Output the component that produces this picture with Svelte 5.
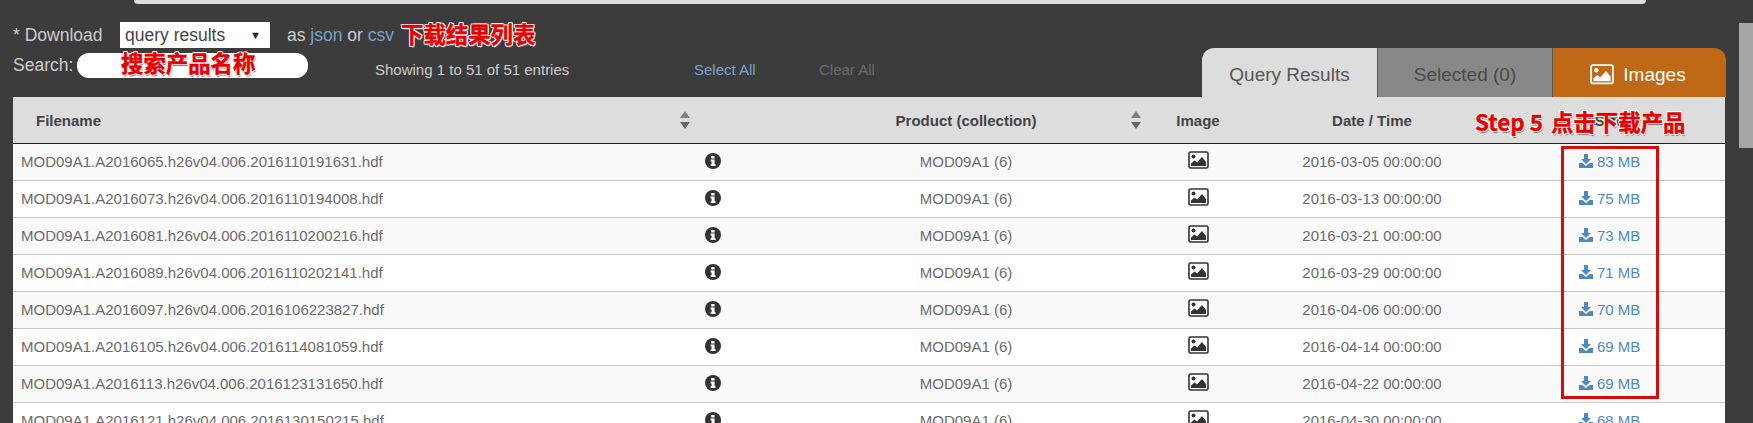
<script>
	const rows = [
		['MOD09A1.A2016065.h26v04.006.2016110191631.hdf', '2016-03-05 00:00:00', '83 MB'],
		['MOD09A1.A2016073.h26v04.006.2016110194008.hdf', '2016-03-13 00:00:00', '75 MB'],
		['MOD09A1.A2016081.h26v04.006.2016110200216.hdf', '2016-03-21 00:00:00', '73 MB'],
		['MOD09A1.A2016089.h26v04.006.2016110202141.hdf', '2016-03-29 00:00:00', '71 MB'],
		['MOD09A1.A2016097.h26v04.006.2016106223827.hdf', '2016-04-06 00:00:00', '70 MB'],
		['MOD09A1.A2016105.h26v04.006.2016114081059.hdf', '2016-04-14 00:00:00', '69 MB'],
		['MOD09A1.A2016113.h26v04.006.2016123131650.hdf', '2016-04-22 00:00:00', '69 MB'],
		['MOD09A1.A2016121.h26v04.006.2016130150215.hdf', '2016-04-30 00:00:00', '68 MB']
	];
</script>

{#snippet sortIcon()}
	<svg class="sort" width="10" height="18" viewBox="0 0 10 18">
		<path d="M5 0 10 7H0z" fill="#808080" />
		<path d="M5 18 0 11H10z" fill="#666" />
	</svg>
{/snippet}

{#snippet pictureIcon(size)}
	<svg width={size} height={size * 0.86} viewBox="0 0 21 18">
		<rect x="1" y="1" width="19" height="16" rx="1.5" fill="none" stroke="currentColor" stroke-width="1.6" />
		<circle cx="5.5" cy="5.5" r="2" fill="currentColor" />
		<path d="M3 15v-2.5l3.5-3 2.5 2 5-5.5 4 5v4z" fill="currentColor" />
	</svg>
{/snippet}

<div class="page">
	<div class="top-bar"></div>
	<div class="scrollbar"></div>

	<div class="download-line">
		<span class="download-label">* Download</span>
		<div class="select"><span>query results</span><span class="caret">▼</span></div>
		<span class="as">as <a href="#json">json</a> or <a href="#csv">csv</a></span>
		<span class="note">下载结果列表</span>
	</div>

	<div class="tool-line">
		<label class="search" for="search">Search:</label>
		<div class="search-box">
			<input id="search" type="text" />
			<span class="note over">搜索产品名称</span>
		</div>
		<span class="entries">Showing 1 to 51 of 51 entries</span>
		<a class="select-all" href="#all">Select All</a>
		<span class="clear-all">Clear All</span>
		<div class="tabs">
			<div class="tab query">Query Results</div>
			<div class="tab selected">Selected (0)</div>
			<div class="tab images">{@render pictureIcon(24)}<span>Images</span></div>
		</div>
	</div>

	<div class="table-wrap">
		<table>
			<colgroup>
				<col style="width: 675px" />
				<col style="width: 50px" />
				<col style="width: 48px" />
				<col style="width: 360px" />
				<col style="width: 104px" />
				<col style="width: 244px" />
				<col style="width: 231px" />
			</colgroup>
			<thead>
				<tr>
					<th class="th-file">
						<div class="th-flex"><span>Filename</span>{@render sortIcon()}</div>
					</th>
					<th></th>
					<th></th>
					<th class="th-product">
						<div class="th-grid"><span></span><span>Product (collection)</span>{@render sortIcon()}</div>
					</th>
					<th>Image</th>
					<th>Date / Time</th>
					<th>Size</th>
				</tr>
			</thead>
			<tbody>
				{#each rows as row}
					<tr>
						<td class="file">{row[0]}</td>
						<td class="center">
							<svg class="info" width="16" height="16" viewBox="0 0 16 16">
								<circle cx="8" cy="8" r="8" fill="#333" />
								<path d="M6.2 3h3.4v2.4H6.2zM5.6 6.6h4v4.6h1v1.9H5.6v-1.9h1V8.5h-1z" fill="#fff" />
							</svg>
						</td>
						<td></td>
						<td class="center">MOD09A1 (6)</td>
						<td class="center picture">{@render pictureIcon(21)}</td>
						<td class="center">{row[1]}</td>
						<td class="center">
							<a class="size" href="#get">
								<svg width="14" height="14" viewBox="0 0 14 14">
									<path d="M5 0h4v5h3L7 10 2 5h3z" fill="currentColor" />
									<path d="M0 9h3.4L7 12l3.6-3H14v5H0z" fill="currentColor" />
								</svg>
								{row[2]}
							</a>
						</td>
					</tr>
				{/each}
			</tbody>
		</table>
		<div class="red-box"></div>
		<div class="step-note"><span class="step">Step 5</span> 点击下载产品</div>
	</div>
</div>

<style>
	:global(body) {
		margin: 0;
		background: #3c3c3c;
	}

	.page {
		position: relative;
		height: 423px;
		overflow: hidden;
		background: #3c3c3c;
		font-family: "Liberation Sans", Arial, sans-serif;
		color: #ccc;
	}

	a {
		text-decoration: none;
	}

	.top-bar {
		width: 1512px;
		height: 4px;
		margin-left: 134px;
		background: #ddd;
		border-radius: 0 0 10px 10px;
	}

	.scrollbar {
		position: absolute;
		top: 23px;
		left: 1739px;
		width: 14px;
		height: 125px;
		background: #a6a6a6;
	}

	.download-line {
		display: flex;
		align-items: center;
		height: 22px;
		margin-top: 20px;
		padding-left: 13px;
		font-size: 17.5px;
	}

	.download-label {
		width: 107px;
	}

	.select {
		display: flex;
		justify-content: space-between;
		align-items: center;
		box-sizing: border-box;
		width: 150px;
		height: 26px;
		padding: 0 9px 0 5px;
		background: #fff;
		color: #444;
	}

	.caret {
		font-size: 11px;
		color: #222;
	}

	.as {
		margin-left: 17px;
	}

	.as a,
	.select-all {
		color: #7ba3c8;
	}

	.note {
		margin: 0 0 4px 7px;
		font-family: "Noto Sans CJK SC", sans-serif;
		font-size: 22.4px;
		font-weight: 700;
		line-height: 1;
		color: #e60000;
		-webkit-text-stroke: 0.5px #e60000;
		text-shadow: 1px 0 0 #fff, -1px 0 0 #fff, 0 1px 0 #fff, 0 -1px 0 #fff, 1px 1px 0 #fff, -1px 1px 0 #fff, 1px -1px 0 #fff, -1px -1px 0 #fff, 1px 2px 1px #777;
	}

	.tool-line {
		display: flex;
		align-items: flex-start;
		height: 49px;
		margin-top: 2px;
		padding-left: 13px;
	}

	.search {
		margin-top: 7px;
		width: 64px;
		font-size: 17.5px;
	}

	.search-box {
		position: relative;
		width: 231px;
		height: 25px;
		margin-top: 5px;
	}

	.search-box input {
		display: block;
		box-sizing: border-box;
		width: 100%;
		height: 100%;
		border: 0;
		border-radius: 12px;
		background: #fff;
	}

	.over {
		position: absolute;
		top: -2px;
		left: 44px;
		margin: 0;
	}

	.entries {
		margin: 13px 0 0 67px;
		width: 319px;
		font-size: 15px;
		line-height: 18px;
	}

	.select-all,
	.clear-all {
		margin-top: 14px;
		font-size: 15px;
		line-height: 16px;
	}

	.select-all {
		width: 125px;
	}

	.clear-all {
		width: 383px;
		color: #6a6a6a;
	}

	.tabs {
		display: flex;
		height: 49px;
	}

	.tab {
		display: flex;
		justify-content: center;
		align-items: center;
		gap: 10px;
		box-sizing: border-box;
		height: 49px;
		font-size: 19px;
		padding-top: 4px;
	}

	.query {
		width: 175px;
		background: #ddd;
		color: #555;
		border-radius: 12px 0 0 0;
	}

	.selected {
		width: 175px;
		background: #888;
		color: #484848;
		border-left: 1px solid #555;
	}

	.images {
		width: 174px;
		gap: 9px;
		padding-right: 3px;
		background: #bf6816;
		color: #fff;
		border-left: 1px solid #555;
		border-radius: 0 12px 0 0;
	}

	.table-wrap {
		position: relative;
		width: 1712px;
		margin-left: 13px;
	}

	table {
		width: 1712px;
		table-layout: fixed;
		border-collapse: collapse;
		font-size: 15px;
		color: #6b6b6b;
	}

	th {
		height: 46px;
		padding: 0;
		background: #ddd;
		border-bottom: 1px solid #222;
		font-weight: 700;
		color: #444;
		font-size: 15px;
		text-align: center;
	}

	.th-file {
		padding-left: 23px;
		text-align: left;
	}

	.th-flex {
		display: flex;
		justify-content: space-between;
		align-items: center;
		margin-right: -2px;
	}

	.th-grid {
		display: grid;
		grid-template-columns: 1fr auto 1fr;
		align-items: center;
	}

	.th-grid .sort {
		justify-self: end;
		margin-right: 5px;
	}

	td {
		height: 34px;
		padding: 0 0 2px;
		border-bottom: 1px solid #c8c8c8;
		background: #fff;
	}

	tbody tr:nth-child(odd) td {
		background: #f9f9f9;
	}

	.file {
		padding-left: 8px;
	}

	.center {
		text-align: center;
	}

	.info {
		display: block;
		margin: -1px auto 0;
	}

	.picture {
		color: #333;
	}

	.picture svg {
		display: block;
		margin: -1px auto 0;
	}

	.size {
		color: #4f8abf;
		white-space: nowrap;
	}

	.size svg {
		vertical-align: -1px;
	}

	.red-box {
		position: absolute;
		top: 49px;
		left: 1548px;
		box-sizing: border-box;
		width: 98px;
		height: 253px;
		border: 3px solid #d90a0a;
	}

	.step-note {
		position: absolute;
		top: 11px;
		left: 1462px;
		white-space: nowrap;
		font-family: "Noto Sans CJK SC", sans-serif;
		font-size: 22.4px;
		font-weight: 700;
		line-height: 26px;
		color: #e60000;
		-webkit-text-stroke: 0.5px #e60000;
		text-shadow: 1px 0 0 #fff, -1px 0 0 #fff, 0 1px 0 #fff, 0 -1px 0 #fff, 1px 1px 0 #fff, -1px 1px 0 #fff, 1px -1px 0 #fff, -1px -1px 0 #fff, 1px 2px 1px #777;
	}

	.step {
		margin-right: 3px;
	}
</style>
